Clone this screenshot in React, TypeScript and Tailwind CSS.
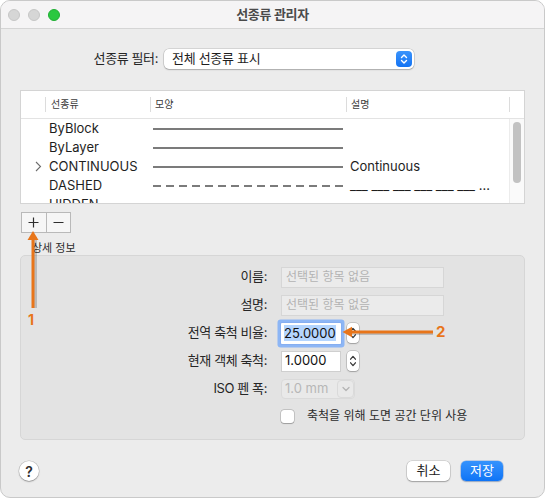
import React from 'react';

const Stepper = () => (
  <div className="ml-[6px] flex h-[20px] w-[12px] items-center justify-center rounded-[4px] bg-white shadow-[0_0_0_0.5px_rgba(0,0,0,0.25),0_1px_1.5px_rgba(0,0,0,0.2)]">
    <svg width="8" height="16" viewBox="0 0 8 16">
      <path d="M1.6 6.2 L4 3.4 L6.4 6.2 M1.6 9.8 L4 12.6 L6.4 9.8" fill="none" stroke="#3a3a3a" strokeWidth="1.3" strokeLinecap="round" strokeLinejoin="round" />
    </svg>
  </div>
);

const LineSample = ({ dashed }: { dashed?: boolean }) => (
  <svg width="190" height="4" viewBox="0 0 190 4" className="block">
    <line x1="0" y1="2" x2="190" y2="2" stroke="#7b7b7b" strokeWidth="2" strokeDasharray={dashed ? '8 5' : undefined} />
  </svg>
);

const rows = [
  { name: 'ByBlock', desc: '' },
  { name: 'ByLayer', desc: '' },
  { name: 'CONTINUOUS', desc: 'Continuous', open: true },
  { name: 'DASHED', desc: '___ ___ ___ ___ ___ ___ ___ ___ ___ ___', dashed: true },
  { name: 'HIDDEN', desc: '', dashed: true },
];

const FieldLabel = ({ children }: { children: React.ReactNode }) => (
  <div className="w-[246px] whitespace-nowrap text-right text-[13px] tracking-[-0.4px] text-[#262626]">{children}</div>
);

export default function App() {
  return (
    <div className="relative h-[498px] w-[545px] overflow-hidden bg-white font-['Inter','Noto_Sans_CJK_KR',sans-serif] antialiased">
      <div className="flex h-full flex-col overflow-hidden rounded-[10px] border border-[#c9c9c9] bg-[#ececec]">
        {/* Title bar */}
        <div className="grid h-[28px] shrink-0 grid-cols-[1fr_auto_1fr] items-center border-b border-[#d5d5d5] bg-[#f5f4f5]">
          <div className="flex items-center gap-[8px] pl-[7px]">
            <span className="h-[12px] w-[12px] rounded-full border border-[#c6c6c6] bg-[#d6d6d6]" />
            <span className="h-[12px] w-[12px] rounded-full border border-[#c6c6c6] bg-[#d6d6d6]" />
            <span className="h-[12px] w-[12px] rounded-full border border-[#1fae33] bg-[#2ac840]" />
          </div>
          <div className="text-[13px] font-bold tracking-[-0.3px] text-[#4a4a4a]">선종류 관리자</div>
          <div />
        </div>

        {/* Filter */}
        <div className="mt-[20px] flex items-center">
          <span className="w-[157px] whitespace-nowrap text-right text-[13px] tracking-[-0.4px] text-[#262626]">선종류 필터:</span>
          <div className="ml-[6px] flex h-[20px] w-[250px] items-center justify-between rounded-[5px] bg-white pl-[8px] pr-[2px] shadow-[0_0_0_0.5px_rgba(0,0,0,0.2),0_1px_1.5px_rgba(0,0,0,0.2)]">
            <span className="text-[13px] tracking-[-0.3px] text-[#1f1f1f]">전체 선종류 표시</span>
            <div className="flex h-[16px] w-[16px] items-center justify-center rounded-[4px] bg-gradient-to-b from-[#3a93fb] to-[#1273f3]">
              <svg width="8" height="12" viewBox="0 0 8 12">
                <path d="M1.5 4.5 L4 2 L6.5 4.5 M1.5 7.5 L4 10 L6.5 7.5" fill="none" stroke="#fff" strokeWidth="1.4" strokeLinecap="round" strokeLinejoin="round" />
              </svg>
            </div>
          </div>
        </div>

        {/* List */}
        <div className="ml-[19px] mt-[21px] flex h-[114px] w-[505px] flex-col overflow-hidden border border-[#d4d4d4] bg-white">
          <div className="grid h-[28px] shrink-0 grid-cols-[24px_105px_196px_163px_1fr] items-center border-b border-[#e3e3e3] text-[10px] text-[#3c3c3c]">
            <div />
            <div className="flex h-[15px] items-center border-l border-[#dcdcdc] pl-[5px]">선종류</div>
            <div className="flex h-[15px] items-center border-l border-[#dcdcdc] pl-[4px]">모양</div>
            <div className="flex h-[15px] items-center border-l border-[#dcdcdc] pl-[4px]">설명</div>
            <div className="h-[15px] border-l border-[#dcdcdc]" />
          </div>
          <div className="flex min-h-0 flex-1">
            <div className="w-[488px] overflow-hidden">
              {rows.map((r) => (
                <div key={r.name} className="grid h-[19px] grid-cols-[24px_105px_196px_163px] items-center text-[13px] text-[#1e1e1e]">
                  <div className="flex justify-end pr-[3px]">
                    {r.open && (
                      <svg width="7" height="11" viewBox="0 0 7 11">
                        <path d="M1 1 L5.5 5.5 L1 10" fill="none" stroke="#6e6e6e" strokeWidth="1.1" />
                      </svg>
                    )}
                  </div>
                  <div className="pl-[4px]">{r.name}</div>
                  <div className="pl-[3px]">
                    <LineSample dashed={r.dashed} />
                  </div>
                  <div className="overflow-hidden text-ellipsis whitespace-nowrap pl-[4px] pr-[14px] text-[#1e1e1e]">{r.desc}</div>
                </div>
              ))}
            </div>
            <div className="flex flex-1 justify-center border-l border-[#ececec] bg-[#fafafa] pt-[3px]">
              <div className="h-[61px] w-[8px] rounded-full bg-[#c2c2c2]" />
            </div>
          </div>
        </div>

        {/* + / - */}
        <div className="ml-[20px] mt-[8px] flex h-[21px] w-[50px] shrink-0 border border-[#b9b9b9] bg-[#f6f6f6]">
          <div className="flex flex-1 items-center justify-center border-r border-[#b9b9b9]">
            <svg width="11" height="11" viewBox="0 0 11 11"><path d="M5.5 0.5 V10.5 M0.5 5.5 H10.5" stroke="#2e2e2e" strokeWidth="1.2" /></svg>
          </div>
          <div className="flex flex-1 items-center justify-center">
            <svg width="11" height="11" viewBox="0 0 11 11"><path d="M0.5 5.5 H10.5" stroke="#2e2e2e" strokeWidth="1.2" /></svg>
          </div>
        </div>

        <div className="ml-[31px] mt-[8px] text-[11px] leading-[14px] text-[#2b2b2b]">상세 정보</div>

        {/* Details panel */}
        <div className="ml-[19px] mt-[0px] flex h-[185px] w-[505px] shrink-0 flex-col gap-[6px] rounded-[5px] border border-[#d6d6d6] bg-[#e3e3e3] pt-[10px]">
          <div className="flex h-[22px] items-center">
            <FieldLabel>이름:</FieldLabel>
            <div className="ml-[14px] flex h-[21px] w-[163px] items-center border border-[#d6d6d6] bg-[#ebebeb] pl-[4px] text-[12px] text-[#b3b3b3]">선택된 항목 없음</div>
          </div>
          <div className="flex h-[22px] items-center">
            <FieldLabel>설명:</FieldLabel>
            <div className="ml-[14px] flex h-[21px] w-[163px] items-center border border-[#d6d6d6] bg-[#ebebeb] pl-[4px] text-[12px] text-[#b3b3b3]">선택된 항목 없음</div>
          </div>
          <div className="flex h-[22px] items-center">
            <FieldLabel>전역 축척 비율:</FieldLabel>
            <div className="ml-[14px] flex h-[21px] w-[60px] items-center rounded-[1px] bg-white pl-[3px] shadow-[0_0_0_1px_#86aef0,0_0_0_3.5px_#8db6f5]">
              <span className="bg-[#b4d5fe] text-[13px] leading-[16px] text-[#111]">25.0000</span>
            </div>
            <Stepper />
          </div>
          <div className="flex h-[22px] items-center">
            <FieldLabel>현재 객체 축척:</FieldLabel>
            <div className="ml-[14px] flex h-[21px] w-[60px] items-center border border-[#cfcfcf] bg-white pl-[3px] text-[13px] text-[#111]">1.0000</div>
            <Stepper />
          </div>
          <div className="flex h-[22px] items-center">
            <FieldLabel>ISO 펜 폭:</FieldLabel>
            <div className="ml-[14px] flex h-[20px] w-[74px] items-center justify-between rounded-[4px] border border-[#dadada] bg-[#e9e9e9] pl-[3px] text-[13px] text-[#b7b7b7]">
              <span>1.0 mm</span>
              <div className="flex h-[18px] w-[17px] items-center justify-center rounded-[4px] border border-[#dadada]">
                <svg width="8" height="6" viewBox="0 0 8 6"><path d="M1 1.5 L4 4.5 L7 1.5" fill="none" stroke="#b5b5b5" strokeWidth="1.3" strokeLinecap="round" strokeLinejoin="round" /></svg>
              </div>
            </div>
          </div>
          <div className="flex h-[20px] items-center">
            <div className="w-[246px]" />
            <div className="ml-[14px] h-[13px] w-[13px] rounded-[3px] bg-white shadow-[0_0_0_0.5px_rgba(0,0,0,0.25),0_0.5px_1px_rgba(0,0,0,0.2)]" />
            <span className="ml-[13px] text-[12px] text-[#2b2b2b]">축척을 위해 도면 공간 단위 사용</span>
          </div>
        </div>

        {/* Bottom buttons */}
        <div className="mt-[21px] flex items-center pl-[18px] pr-[41px]">
          <div className="flex h-[20px] w-[20px] items-center justify-center rounded-full bg-white text-[14px] font-semibold text-[#2f2f2f] shadow-[0_0_0_0.5px_rgba(0,0,0,0.2),0_1px_1.5px_rgba(0,0,0,0.25)]">?</div>
          <div className="flex-1" />
          <div className="flex h-[20px] w-[43px] items-center justify-center rounded-[5px] bg-white text-[13px] text-[#222] shadow-[0_0_0_0.5px_rgba(0,0,0,0.2),0_1px_1.5px_rgba(0,0,0,0.25)]">취소</div>
          <div className="ml-[11px] flex h-[20px] w-[42px] items-center justify-center rounded-[5px] bg-gradient-to-b from-[#3593fd] to-[#0d74f6] text-[13px] text-white shadow-[0_0_0_0.5px_rgba(0,80,200,0.4),0_1px_1.5px_rgba(0,0,0,0.2)]">저장</div>
        </div>
      </div>

      {/* Annotation 1 */}
      <svg className="absolute left-[26px] top-[229px]" width="18" height="82" viewBox="0 0 18 82">
        <line x1="9.5" y1="8" x2="9.5" y2="79" stroke="rgba(0,0,0,0.18)" strokeWidth="3" />
        <line x1="7" y1="8" x2="7" y2="79" stroke="#e8751a" strokeWidth="3" />
        <path d="M7 2 L12.5 11 L1.5 11 Z" fill="#e8751a" />
      </svg>
      <div className="absolute left-[28px] top-[311px] text-[14px] font-bold leading-[18px] text-[#e8751a]">1</div>

      {/* Annotation 2 */}
      <svg className="absolute left-[341px] top-[325px]" width="94" height="16" viewBox="0 0 94 16">
        <line x1="10" y1="8.5" x2="92" y2="8.5" stroke="rgba(0,0,0,0.18)" strokeWidth="3" />
        <line x1="10" y1="7" x2="92" y2="7" stroke="#e8751a" strokeWidth="3" />
        <path d="M1.5 7 L11 1.8 L11 12.2 Z" fill="#e8751a" />
      </svg>
      <div className="absolute left-[436px] top-[323px] text-[15px] font-bold leading-[18px] text-[#e8751a]">2</div>
    </div>
  );
}
